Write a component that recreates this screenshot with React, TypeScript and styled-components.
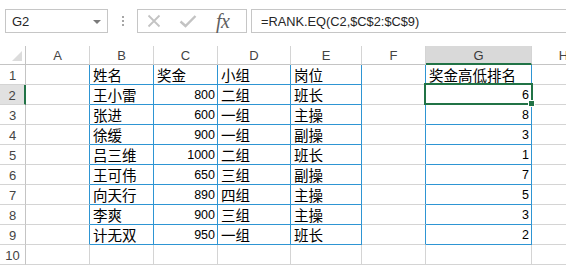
import React from 'react';
import styled, { createGlobalStyle, css } from 'styled-components';

const GREEN = '#217346';
const BLUE = '#2e95d3';
const GRID = '#d4d4d4';
const HEAD_LINE = '#c4c4c4';

const GlobalStyle = createGlobalStyle`
  html, body {
    margin: 0;
    padding: 0;
    background: #ffffff;
  }
  body {
    width: 566px;
    height: 266px;
    overflow: hidden;
    font-family: "Liberation Sans", "Noto Sans CJK SC", sans-serif;
  }
`;

// 列宽 (含右边框)
const colWidths = [26, 64, 64, 64, 73, 71, 64, 106, 64];
const colNames = ['A', 'B', 'C', 'D', 'E', 'F', 'G', 'H'];

type CellValue = string | number;

const data: CellValue[][] = [
  ['', '姓名', '奖金', '小组', '岗位', '', '奖金高低排名', ''],
  ['', '王小雷', 800, '二组', '班长', '', 6, ''],
  ['', '张进', 600, '一组', '主操', '', 8, ''],
  ['', '徐缓', 900, '一组', '副操', '', 3, ''],
  ['', '吕三维', 1000, '二组', '班长', '', 1, ''],
  ['', '王可伟', 650, '三组', '副操', '', 7, ''],
  ['', '向天行', 890, '四组', '主操', '', 5, ''],
  ['', '李爽', 900, '三组', '主操', '', 3, ''],
  ['', '计无双', 950, '一组', '班长', '', 2, ''],
  ['', '', '', '', '', '', '', ''],
];

function isBlue(r: number, c: number): boolean {
  if (r < 0 || r > 8) return false;
  return (c >= 1 && c <= 4) || c === 6;
}

const App = () => {
  return (
    <>
      <GlobalStyle />
      <Window>
        <FormulaBar>
          <NameBox>
            <span>G2</span>
            <DropArrow />
          </NameBox>
          <Grip>
            <i />
            <i />
            <i />
          </Grip>
          <FxBox>
            <svg width="14" height="14" viewBox="0 0 14 14">
              <path d="M1.5 1.5 L12.5 12.5 M12.5 1.5 L1.5 12.5" stroke="#c3c3c3" strokeWidth="1.8" fill="none" />
            </svg>
            <svg width="18" height="14" viewBox="0 0 18 14">
              <path d="M1.5 7.5 L6.5 12 L16.5 2" stroke="#c3c3c3" strokeWidth="2.4" fill="none" />
            </svg>
            <FxLabel>fx</FxLabel>
          </FxBox>
          <FormulaInput>=RANK.EQ(C2,$C$2:$C$9)</FormulaInput>
        </FormulaBar>

        <Sheet>
          <Corner>
            <CornerTriangle />
          </Corner>
          {colNames.map((name) => (
            <ColHead key={name} $selected={name === 'G'}>
              {name}
            </ColHead>
          ))}
          {data.map((row, r) => (
            <React.Fragment key={r}>
              <RowHead $selected={r === 1}>{r + 1}</RowHead>
              {row.map((value, c) => (
                <Cell
                  key={c}
                  $num={typeof value === 'number'}
                  $blueRight={isBlue(r, c) || isBlue(r, c + 1)}
                  $blueBottom={isBlue(r, c) || isBlue(r + 1, c)}
                >
                  {value}
                </Cell>
              ))}
            </React.Fragment>
          ))}
          <Selection>
            <FillHandle />
          </Selection>
        </Sheet>
      </Window>
    </>
  );
};

const Window = styled.div`
  width: 566px;
  height: 266px;
  overflow: hidden;
  background: #ffffff;
`;

const FormulaBar = styled.div`
  display: flex;
  align-items: stretch;
  height: 24px;
  margin-top: 9px;
  padding-left: 5px;
  color: #262626;
  font-size: 12.5px;
`;

const NameBox = styled.div`
  box-sizing: border-box;
  width: 103px;
  border: 1px solid #c6c6c6;
  display: flex;
  align-items: center;
  justify-content: space-between;
  padding: 1px 6px 0 6px;
  font-size: 13px;
`;

const DropArrow = styled.span`
  width: 0;
  height: 0;
  border-left: 4px solid transparent;
  border-right: 4px solid transparent;
  border-top: 4px solid #7a7a7a;
`;

const Grip = styled.div`
  width: 29px;
  display: flex;
  flex-direction: column;
  align-items: center;
  justify-content: center;
  gap: 2px;
  i {
    display: block;
    width: 2px;
    height: 2px;
    background: #a6a6a6;
  }
`;

const FxBox = styled.div`
  box-sizing: border-box;
  width: 110px;
  border: 1px solid #c6c6c6;
  display: flex;
  align-items: center;
  padding-left: 9px;
  gap: 18px;
  svg {
    flex: 0 0 auto;
  }
`;

const FxLabel = styled.span`
  font-family: "Liberation Serif", "DejaVu Serif", serif;
  font-style: italic;
  font-size: 20px;
  color: #5f5f5f;
  margin-left: 1px;
  letter-spacing: -0.5px;
`;

const FormulaInput = styled.div`
  flex: 1;
  margin-left: 4px;
  border: 1px solid #c6c6c6;
  border-right: none;
  display: flex;
  align-items: center;
  padding: 1px 0 0 9px;
  white-space: nowrap;
  font-size: 12.8px;
`;

const Sheet = styled.div`
  position: relative;
  margin-top: 13px;
  display: grid;
  grid-template-columns: ${colWidths.map((w) => w + 'px').join(' ')};
  grid-template-rows: 19px repeat(10, 20px);
  width: max-content;
`;

const headBase = css`
  box-sizing: border-box;
  display: flex;
  align-items: center;
  justify-content: center;
  color: #444444;
  font-size: 13px;
  background: #ffffff;
`;

const Corner = styled.div`
  ${headBase};
  position: relative;
  border-right: 1px solid ${HEAD_LINE};
  border-bottom: 1px solid ${HEAD_LINE};
`;

const CornerTriangle = styled.span`
  position: absolute;
  right: 3px;
  bottom: 3px;
  width: 0;
  height: 0;
  border-left: 10px solid transparent;
  border-bottom: 10px solid #dcdcdc;
`;

const ColHead = styled.div<{ $selected?: boolean }>`
  ${headBase};
  padding-top: 1px;
  border-right: 1px solid ${GRID};
  border-bottom: ${(p) => (p.$selected ? `2px solid ${GREEN}` : `1px solid ${HEAD_LINE}`)};
  background: ${(p) => (p.$selected ? '#d9d9d9' : '#ffffff')};
  color: ${(p) => (p.$selected ? '#3a3a3a' : '#444444')};
`;

const RowHead = styled.div<{ $selected?: boolean }>`
  ${headBase};
  border-bottom: 1px solid ${GRID};
  border-right: ${(p) => (p.$selected ? `2px solid ${GREEN}` : `1px solid ${HEAD_LINE}`)};
  background: ${(p) => (p.$selected ? '#e1e1e1' : '#ffffff')};
  padding-top: 2px;
`;

const Cell = styled.div<{ $num?: boolean; $blueRight?: boolean; $blueBottom?: boolean }>`
  box-sizing: border-box;
  display: flex;
  align-items: flex-end;
  justify-content: ${(p) => (p.$num ? 'flex-end' : 'flex-start')};
  padding: 0 ${(p) => (p.$num ? '2px' : '0')} 1px ${(p) => (p.$num ? '0' : '3px')};
  border-right: 1px solid ${(p) => (p.$blueRight ? BLUE : GRID)};
  border-bottom: 1px solid ${(p) => (p.$blueBottom ? BLUE : GRID)};
  white-space: nowrap;
  overflow: visible;
  color: #000000;
  font-family: ${(p) =>
    p.$num ? '"Liberation Sans", sans-serif' : '"Noto Sans CJK SC", "Noto Sans", sans-serif'};
  font-size: ${(p) => (p.$num ? '12.5px' : '14.5px')};
  line-height: ${(p) => (p.$num ? '15px' : '17px')};
`;

// 当前选中单元格 G2 的绿色框
const Selection = styled.div`
  position: absolute;
  left: 424px;
  top: 37px;
  width: 109px;
  height: 22px;
  box-sizing: border-box;
  border: 2px solid ${GREEN};
  pointer-events: none;
`;

const FillHandle = styled.span`
  position: absolute;
  right: -4px;
  bottom: -4px;
  width: 5px;
  height: 5px;
  background: ${GREEN};
  border: 1px solid #ffffff;
`;

export default App;
